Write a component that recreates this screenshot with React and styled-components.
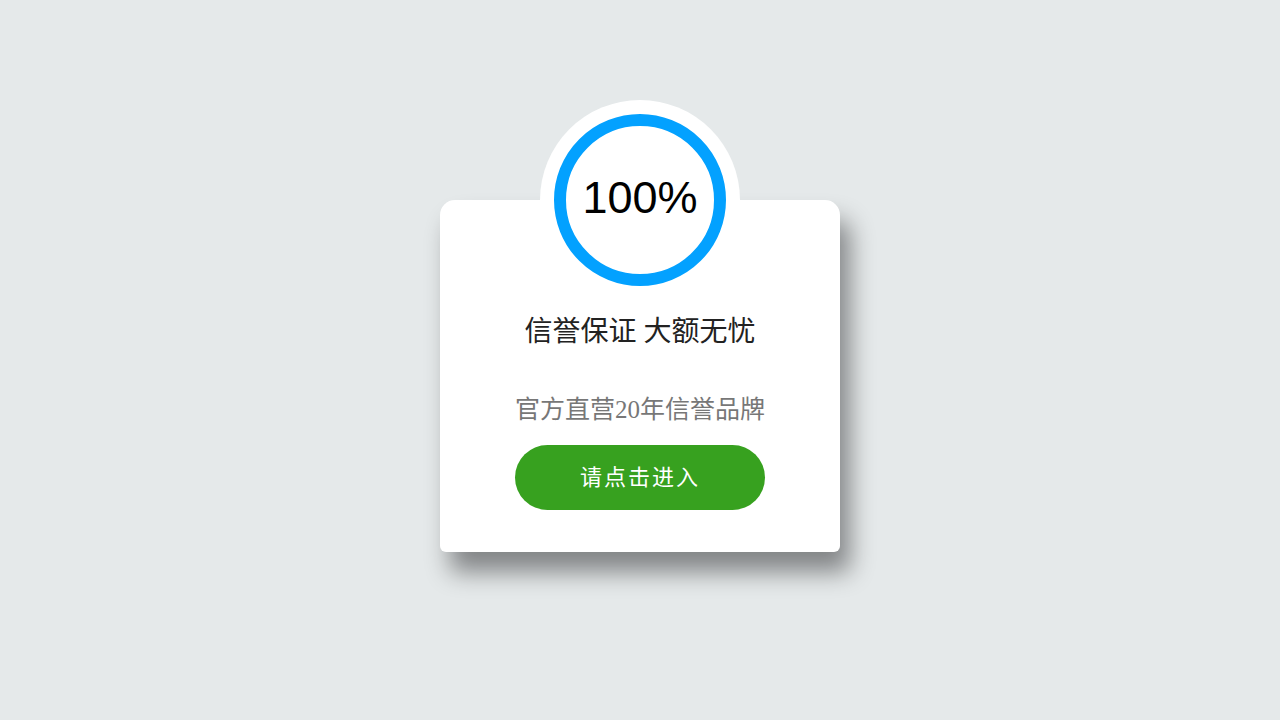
import React from "react";
import styled, { createGlobalStyle } from "styled-components";

const GlobalStyle = createGlobalStyle`
    body{
        margin: 0;
        background: #e5e9ea;
        font-family: "Liberation Serif", "Noto Sans CJK SC", serif;
    }
`;

/* 组件的样式 */
const StyledPage = styled.main`
    display: flex;
    justify-content: center;
    padding: 200px 20px 100px;
`;

const StyledCard = styled.section`
    display: flex;
    flex-direction: column;
    align-items: center;
    box-sizing: border-box;
    width: 100%;
    max-width: 400px;
    padding-bottom: 42px;
    border-radius: 15px 15px 6px 6px;
    background: #fff;
    box-shadow: 10px 20px 25px rgba(0, 0, 5, .43);
`;

const StyledProgress = styled.div`
    display: grid;
    place-items: center;
    width: 200px;
    height: 200px;
    margin-top: -100px;
    border-radius: 50%;
    background: #fff;

    svg, span{
        grid-area: 1 / 1;
    }

    span{
        padding-bottom: 4px;
        line-height: 52px;
        font-family: "Liberation Sans", Arial, sans-serif;
        font-size: 45px;
        color: #000;
    }
`;

const StyledTitle = styled.h1`
    margin: 12px 0 0;
    line-height: 40px;
    font-size: 28px;
    font-weight: 400;
    color: #222;
`;

const StyledDesc = styled.p`
    margin: 38px 0 0;
    line-height: 40px;
    font-size: 25px;
    color: #777;
`;

const StyledButton = styled.button`
    width: 250px;
    height: 65px;
    margin-top: 15px;
    padding: 0 0 6px;
    border: none;
    border-radius: 33px;
    background: #37a11f;
    color: #fff;
    font-family: inherit;
    font-size: 22px;
    letter-spacing: 2px;
    cursor: pointer;
`;

const Progress = function Progress({ percent }) {
    return <StyledProgress>
        <svg width="172" height="172" viewBox="0 0 172 172" aria-hidden="true">
            <circle cx="86" cy="86" r="80" fill="none" stroke="#03a1ff" strokeWidth="12" />
        </svg>
        <span>{percent}%</span>
    </StyledProgress>;
};

const App = function App() {
    return <>
        <GlobalStyle />
        <StyledPage>
            <StyledCard>
                <Progress percent={100} />
                <StyledTitle>信誉保证 大额无忧</StyledTitle>
                <StyledDesc>官方直营20年信誉品牌</StyledDesc>
                <StyledButton type="button">请点击进入</StyledButton>
            </StyledCard>
        </StyledPage>
    </>;
};

export default App;
